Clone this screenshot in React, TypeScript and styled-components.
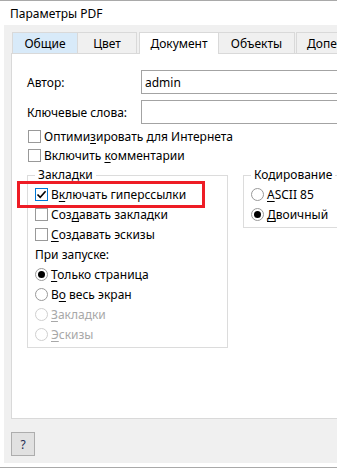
import React from "react";
import styled, { createGlobalStyle, css } from "styled-components";

const Global = createGlobalStyle`
  html, body { margin: 0; padding: 0; background: #ffffff; }
  body { font-family: "Noto Sans", "Segoe UI", sans-serif; font-size: 12px; color: #000; }
  * { box-sizing: border-box; }
`;

const Window = styled.div`
  width: 337px;
  height: 470px;
  overflow: hidden;
  background: #ffffff;
  border-top: 1px solid #a9a9a9;
  display: flex;
  flex-direction: column;
`;

const TitleBar = styled.div`
  height: 24px;
  display: flex;
  align-items: center;
  padding-left: 10px;
  font-size: 12px;
  color: #000;
`;

const Body = styled.div`
  margin-left: 4px;
  height: 438px;
  background: #f0f0f0;
  padding: 7px 0 7px 7px;
  overflow: hidden;
  display: flex;
  flex-direction: column;
`;

const FooterLine = styled.div`
  margin-top: 4px;
  height: 1px;
  background: #a9a9a9;
`;

const TabStrip = styled.div`
  display: flex;
  align-items: flex-end;
  height: 21px;
  padding-left: 1px;
  position: relative;
  z-index: 1;
`;

const Tab = styled.div<{ $w: number; $ml: number; $active?: boolean; $hover?: boolean; $start?: boolean }>`
  flex: none;
  width: ${(p) => p.$w}px;
  margin-left: ${(p) => p.$ml}px;
  height: 21px;
  border: 1px solid #d9d9d9;
  border-bottom: none;
  background: #f0f0f0;
  display: flex;
  align-items: center;
  justify-content: ${(p) => (p.$start ? "flex-start" : "center")};
  padding-left: ${(p) => (p.$start ? 10 : 0)}px;
  white-space: nowrap;
  overflow: hidden;
  font-size: 12px;
  ${(p) =>
    p.$hover &&
    css`
      background: #d8eaf9;
    `}
  ${(p) =>
    p.$active &&
    css`
      background: #ffffff;
      height: 22px;
      margin-bottom: -1px;
    `}
`;

const Panel = styled.div`
  position: relative;
  width: 420px;
  height: 366px;
  flex: none;
  background: #ffffff;
  border: 1px solid #d9d9d9;
  padding: 16px 0 0 15px;
`;

const FieldRow = styled.div<{ $mt?: number }>`
  display: flex;
  align-items: center;
  margin-top: ${(p) => p.$mt ?? 0}px;
`;

const FieldLabel = styled.div`
  width: 114px;
  flex: none;
`;

const TextBox = styled.div`
  width: 260px;
  height: 24px;
  border: 1px solid #a3a3a3;
  background: #fff;
  display: flex;
  align-items: center;
  padding-left: 3px;
`;

const CheckRow = styled.div<{ $h?: number; $disabled?: boolean; $mt?: number; $ml?: number }>`
  display: flex;
  align-items: center;
  height: ${(p) => p.$h ?? 20}px;
  margin-top: ${(p) => p.$mt ?? 0}px;
  margin-left: ${(p) => p.$ml ?? 0}px;
  white-space: nowrap;
  color: ${(p) => (p.$disabled ? "#a8a8a8" : "#000")};
`;

const Box = styled.span<{ $checked?: boolean }>`
  flex: none;
  width: 13px;
  height: 13px;
  border: 1px solid ${(p) => (p.$checked ? "#0078d7" : "#999999")};
  background: #fff;
  margin-right: 3px;
  display: flex;
  align-items: center;
  justify-content: center;
`;

const Radio = styled.span<{ $checked?: boolean; $disabled?: boolean }>`
  flex: none;
  width: 13px;
  height: 13px;
  border-radius: 50%;
  border: 1px solid ${(p) => (p.$disabled ? "#cfcfcf" : "#999999")};
  background: #fff;
  margin-right: 3px;
  display: flex;
  align-items: center;
  justify-content: center;
  &::after {
    content: "";
    display: ${(p) => (p.$checked ? "block" : "none")};
    width: 7px;
    height: 7px;
    border-radius: 50%;
    background: #000;
  }
`;

const Key = styled.u`
  text-decoration: underline;
  text-underline-offset: 2px;
  text-decoration-thickness: 1px;
`;

const PlainRow = styled.div`
  height: 20px;
  display: flex;
  align-items: center;
`;

const GroupsRow = styled.div`
  display: flex;
  align-items: flex-start;
  margin-top: 2px;
`;

const Group = styled.fieldset<{ $w: number; $ml?: number }>`
  flex: none;
  width: ${(p) => p.$w}px;
  margin: 0 0 0 ${(p) => p.$ml ?? 0}px;
  padding: 1px 8px 3px 7px;
  border: 1px solid #dcdcdc;
  min-width: 0;
`;

const Legend = styled.legend`
  padding: 0 3px;
  line-height: 16px;
  font-size: 12px;
`;

const Highlight = styled.div`
  position: absolute;
  left: 5px;
  top: 127px;
  width: 188px;
  height: 27px;
  border: 3px solid #ee1c25;
  pointer-events: none;
`;

const HelpButton = styled.button`
  flex: none;
  margin-top: 13px;
  width: 24px;
  height: 24px;
  padding: 0;
  border: 1px solid #adadad;
  background: #e1e1e1;
  font-family: "Noto Sans", "Segoe UI", sans-serif;
  font-size: 12px;
  color: #1a2a50;
  display: flex;
  align-items: center;
  justify-content: center;
`;

const Check = () => (
  <svg width="11" height="11" viewBox="0 0 11 11">
    <path d="M1.5 5.5 L4.2 8.3 L9.6 2.2" fill="none" stroke="#000" strokeWidth="1.6" />
  </svg>
);

export default function App() {
  return (
    <>
      <Global />
      <Window>
        <TitleBar>Параметры PDF</TitleBar>
        <Body>
          <TabStrip>
            <Tab $w={66} $ml={0} $hover>
              Общие
            </Tab>
            <Tab $w={60} $ml={-1}>
              Цвет
            </Tab>
            <Tab $w={80} $ml={2} $active>
              Документ
            </Tab>
            <Tab $w={77} $ml={-1}>
              Объекты
            </Tab>
            <Tab $w={160} $ml={1} $start>
              Допечатная подготовка
            </Tab>
          </TabStrip>
          <Panel>
            <FieldRow>
              <FieldLabel>Автор:</FieldLabel>
              <TextBox>admin</TextBox>
            </FieldRow>
            <FieldRow $mt={6}>
              <FieldLabel>Ключевые слова:</FieldLabel>
              <TextBox />
            </FieldRow>
            <CheckRow $h={19} $mt={3} $ml={1}>
              <Box />
              <span>
                Оптими<Key>з</Key>ировать для Интернета
              </span>
            </CheckRow>
            <CheckRow $h={19} $ml={1}>
              <Box />
              <span>
                Включить <Key>к</Key>омментарии
              </span>
            </CheckRow>
            <GroupsRow>
              <Group $w={201}>
                <Legend>Закладки</Legend>
                <CheckRow>
                  <Box $checked>
                    <Check />
                  </Box>
                  <span>
                    В<Key>к</Key>лючать гиперссылки
                  </span>
                </CheckRow>
                <CheckRow>
                  <Box />
                  <span>
                    Соз<Key>д</Key>авать закладки
                  </span>
                </CheckRow>
                <CheckRow>
                  <Box />
                  <span>
                    <Key>С</Key>оздавать эскизы
                  </span>
                </CheckRow>
                <PlainRow>При запуске:</PlainRow>
                <CheckRow>
                  <Radio $checked />
                  <span>
                    <Key>Т</Key>олько страница
                  </span>
                </CheckRow>
                <CheckRow>
                  <Radio />
                  <span>
                    В<Key>о</Key> весь экран
                  </span>
                </CheckRow>
                <CheckRow $disabled>
                  <Radio $disabled />
                  <span>
                    <Key>З</Key>акладки
                  </span>
                </CheckRow>
                <CheckRow $disabled>
                  <Radio $disabled />
                  <span>
                    <Key>Э</Key>скизы
                  </span>
                </CheckRow>
              </Group>
              <Group $w={150} $ml={15}>
                <Legend>Кодирование</Legend>
                <CheckRow>
                  <Radio />
                  <span>
                    <Key>A</Key>SCII 85
                  </span>
                </CheckRow>
                <CheckRow>
                  <Radio $checked />
                  <span>
                    <Key>Д</Key>воичный
                  </span>
                </CheckRow>
              </Group>
            </GroupsRow>
            <Highlight />
          </Panel>
          <HelpButton>?</HelpButton>
        </Body>
        <FooterLine />
      </Window>
    </>
  );
}
